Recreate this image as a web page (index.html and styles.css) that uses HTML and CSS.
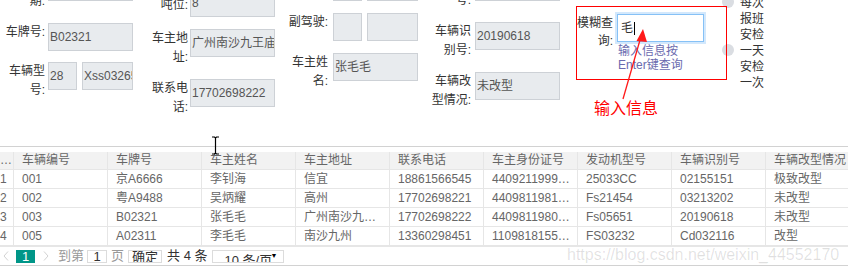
FILE: index.html
```html
<!DOCTYPE html>
<html lang="zh-CN">
<head>
<meta charset="utf-8">
<title>车辆信息</title>
<link rel="stylesheet" href="styles.css">
</head>
<body>
<div class="top">
  <div class="form">
    <div class="col c1">
      <div class="field"><span class="lbl">登记日期:</span><div class="inp w85"></div></div>
      <div class="field"><span class="lbl">车牌号:</span><div class="inp w85">B02321</div></div>
      <div class="field"><span class="lbl">车辆型号:</span><div class="inp w29">28</div><div class="inp w51 ml5">Xss03265</div></div>
    </div>
    <div class="col c2">
      <div class="field"><span class="lbl">核定载吨位:</span><div class="inp w85 off12">8</div></div>
      <div class="field"><span class="lbl">车主地址:</span><div class="inp w85">广州南沙九王庙</div></div>
      <div class="field"><span class="lbl">联系电话:</span><div class="inp w85">17702698222</div></div>
    </div>
    <div class="col c3">
      <div class="field"><span class="lbl">主驾驶:</span><div class="inp w29"></div><div class="inp w51 ml5"></div></div>
      <div class="field"><span class="lbl">副驾驶:</span><div class="inp w29"></div><div class="inp w51 ml5"></div></div>
      <div class="field"><span class="lbl">车主姓名:</span><div class="inp w85">张毛毛</div></div>
    </div>
    <div class="col c4">
      <div class="field lift"><span class="lbl">发动机号:</span><div class="inp w85"></div></div>
      <div class="field"><span class="lbl">车辆识别号:</span><div class="inp w85">20190618</div></div>
      <div class="field"><span class="lbl">车辆改型情况:</span><div class="inp w85">未改型</div></div>
    </div>
    <div class="fuzzy">
      <span class="fz-lbl">模糊查询:</span>
      <div class="fz-right">
        <div class="fz-inp">毛<span class="caret"></span></div>
        <div class="fz-hint">输入信息按Enter键查询</div>
      </div>
    </div>
    <div class="radios">
      <div class="radio"><span class="dot"></span><span class="rtxt">每次报班安检</span></div>
      <div class="radio"><span class="dot"></span><span class="rtxt">一天安检一次</span></div>
    </div>
  </div>
</div>

<div class="grid">
  <div class="tbl-clip">
    <table class="tbl">
      <colgroup>
        <col class="cn"><col class="cw"><col class="cw"><col class="cw"><col class="cw"><col class="cw"><col class="cw"><col class="cw"><col class="cw"><col class="cw">
      </colgroup>
      <thead>
        <tr><th class="num">…</th><th>车辆编号</th><th>车牌号</th><th>车主姓名</th><th>车主地址</th><th>联系电话</th><th>车主身份证号</th><th>发动机型号</th><th>车辆识别号</th><th>车辆改型情况</th></tr>
      </thead>
      <tbody>
        <tr><td class="num">1</td><td>001</td><td>京A6666</td><td>李钊海</td><td>信宜</td><td>18861566545</td><td>4409211999…</td><td>25033CC</td><td>02155151</td><td>极致改型</td></tr>
        <tr><td class="num">2</td><td>002</td><td>粤A9488</td><td>吴炳耀</td><td>高州</td><td>17702698221</td><td>4409811981…</td><td>Fs21454</td><td>03213202</td><td>未改型</td></tr>
        <tr><td class="num">3</td><td>003</td><td>B02321</td><td>张毛毛</td><td>广州南沙九…</td><td>17702698222</td><td>4409811980…</td><td>Fs05651</td><td>20190618</td><td>未改型</td></tr>
        <tr><td class="num">4</td><td>005</td><td>A02311</td><td>李毛毛</td><td>南沙九州</td><td>13360298451</td><td>1109818155…</td><td>FS03232</td><td>Cd032116</td><td>改型</td></tr>
      </tbody>
    </table>
  </div>
  <div class="pager">
    <svg class="chev prev" width="6" height="10" viewBox="0 0 6 10"><polyline points="5,0.5 1,5 5,9.5" fill="none" stroke="#d2d2d2" stroke-width="1"/></svg>
    <span class="pg-cur">1</span>
    <svg class="chev next" width="6" height="10" viewBox="0 0 6 10"><polyline points="1,0.5 5,5 1,9.5" fill="none" stroke="#d2d2d2" stroke-width="1"/></svg>
    <span class="pg-txt gray to">到第</span>
    <span class="pg-box pg-inp">1</span>
    <span class="pg-txt gray page">页</span>
    <span class="pg-box pg-btn">确定</span>
    <span class="pg-txt total">共 4 条</span>
    <span class="pg-box pg-sel"><span class="sel-txt">10 条/页</span><span class="sel-arr">▼</span></span>
  </div>
</div>

<div class="annot-box"></div>
<svg class="annot-arrow" width="40" height="80" viewBox="615 25 40 80">
  <line x1="623" y1="99" x2="640" y2="40" stroke="#ff1a1a" stroke-width="1.3"/>
  <polygon points="643,29 636.5,41 647,42" fill="#ff1a1a"/>
</svg>
<div class="annot-text">输入信息</div>
<div class="watermark">https://blog.csdn.net/weixin_44552170</div>
<svg class="ibeam" width="9" height="19" viewBox="0 0 9 19">
  <path d="M1 1 H3.5 L4.5 2 L5.5 1 H8 M4.5 2 V17 M1 18 H3.5 L4.5 17 L5.5 18 H8" fill="none" stroke="#000" stroke-width="1.2"/>
</svg>
</body>
</html>
```

FILE: styles.css
```css
* { box-sizing: border-box; }
html, body { margin: 0; padding: 0; }
body {
  width: 848px;
  height: 273px;
  overflow: hidden;
  position: relative;
  background: #fff;
  color: #333;
  font-family: "Liberation Sans", "Noto Sans CJK SC", sans-serif;
  font-size: 12px;
}

/* ---------- form ---------- */
.top { height: 146px; overflow: hidden; }
.form { display: flex; align-items: flex-start; margin-top: -27px; }
.col { display: flex; flex-direction: column; gap: 12px; }
.c1 { margin-left: 3px; gap: 11.5px; }
.c2 { margin-left: 13px; margin-top: 4px; }
.c3 { margin-left: 11px; }
.c4 { margin-left: 11px; margin-top: -1px; }
.field { display: flex; align-items: flex-start; }
.lbl {
  width: 42px;
  text-align: right;
  line-height: 19px;
  color: #333;
  margin-right: 3px;
}
.c2 .lbl { margin-right: 2px; }
.c3 .lbl { margin-right: 5px; }
.c4 .lbl { margin-right: 4px; }
.inp {
  height: 28px;
  border: 1px solid #cdd1d6;
  background: #e8ebee;
  color: #555;
  line-height: 26px;
  padding-left: 1px;
  white-space: nowrap;
  overflow: hidden;
  font-size: 12px;
}
.w85 { width: 85px; }
.w29 { width: 29px; }
.w51 { width: 51px; }
.ml5 { margin-left: 5px; }
.off12 { margin-top: 12px; }
.lift .inp { margin-top: 1px; }

/* fuzzy search */
.fuzzy { display: flex; align-items: flex-start; margin-left: 15px; margin-top: 41px; }
.fz-lbl { width: 38px; text-align: right; line-height: 18px; color: #333; }
.fz-right { margin-left: 4px; display: flex; flex-direction: column; }
.fz-inp {
  width: 87px;
  height: 28px;
  border: 1px solid #86c1f6;
  box-shadow: 0 0 0 2px #d3e8fc;
  background: #fff;
  line-height: 26px;
  padding-left: 3px;
  color: #333;
  font-size: 12px;
  display: flex;
  align-items: center;
}
.caret { display: inline-block; width: 1px; height: 13px; background: #000; margin-left: 1px; }
.fz-hint { width: 80px; margin-top: 2px; margin-left: 1px; line-height: 14px; color: #6a6aae; }

/* radios */
.radios { display: flex; flex-direction: column; margin-left: 18px; margin-top: 21.5px; }
.radio { display: flex; align-items: flex-start; }
.dot {
  width: 12px; height: 12px; border-radius: 50%;
  background: #dadde2; margin-top: 1.5px; margin-right: 6px; flex: none;
}
.rtxt { width: 26px; line-height: 16px; color: #333; }

/* ---------- table ---------- */
.grid { border-top: 1px solid #d2d2d2; padding-top: 5px; }
.tbl-clip { width: 848px; overflow: hidden; }
.tbl {
  border-collapse: separate;
  border-spacing: 0;
  table-layout: fixed;
  width: 860px;
  font-size: 12px;
  color: #666;
}
.cn { width: 14px; }
.cw { width: 94px; }
.tbl th, .tbl td {
  border-right: 1px solid #e6e6e6;
  border-bottom: 1px solid #e6e6e6;
  padding: 0 4px 0 8px;
  height: 19px;
  line-height: 18px;
  text-align: left;
  font-weight: normal;
  white-space: nowrap;
  overflow: hidden;
}
.tbl th { background: #f2f2f2; height: 18px; line-height: 17px; color: #666; }
.tbl td { background: #fff; }
.tbl .num { padding: 0 7px 0 0; text-align: right; }
.tbl th.num { padding-right: 5px; }

/* ---------- pager ---------- */
.pager {
  display: flex;
  align-items: center;
  height: 20px;
  border-top: 1px solid #e6e6e6;
  border-bottom: 1px solid #d2d2d2;
  overflow: hidden;
  font-size: 13px;
  color: #333;
}
.chev { flex: none; }
.prev { margin-left: 3px; }
.pg-cur {
  margin-left: 7px; width: 19px; height: 13px; background: #009688; color: #fff;
  text-align: center; line-height: 13px; font-size: 13px;
}
.next { margin-left: 8px; }
.pg-txt { line-height: 16px; white-space: nowrap; }
.gray { color: #999; }
.to { margin-left: 9px; }
.pg-box {
  height: 13px; border: 1px solid #dcdcdc; line-height: 11px; text-align: center;
  white-space: nowrap; overflow: hidden; color: #333;
}
.pg-inp { margin-left: 3px; width: 20px; }
.page { margin-left: 4px; }
.pg-btn { margin-left: 4px; width: 34px; }
.total { margin-left: 5px; }
.pg-sel { margin-left: 4px; width: 72px; position: relative; text-align: left; }
.sel-txt { display: block; padding-left: 12px; line-height: 20px; }
.sel-arr { position: absolute; right: 5px; top: 1px; font-size: 7px; line-height: 7px; color: #000; }

/* ---------- overlays ---------- */
.annot-box {
  position: absolute; left: 576px; top: 6px; width: 151px; height: 74px;
  border: 1.5px solid #ff0000;
}
.annot-arrow { position: absolute; left: 615px; top: 25px; }
.annot-text {
  position: absolute; left: 594px; top: 98px; font-size: 16px; line-height: 22px;
  color: #ff0000; white-space: nowrap;
}
.watermark {
  position: absolute; left: 567px; top: 245px; font-size: 16px; line-height: 20px;
  color: rgba(0, 0, 0, 0.12); white-space: nowrap;
}
.ibeam { position: absolute; left: 211px; top: 136px; }
```
